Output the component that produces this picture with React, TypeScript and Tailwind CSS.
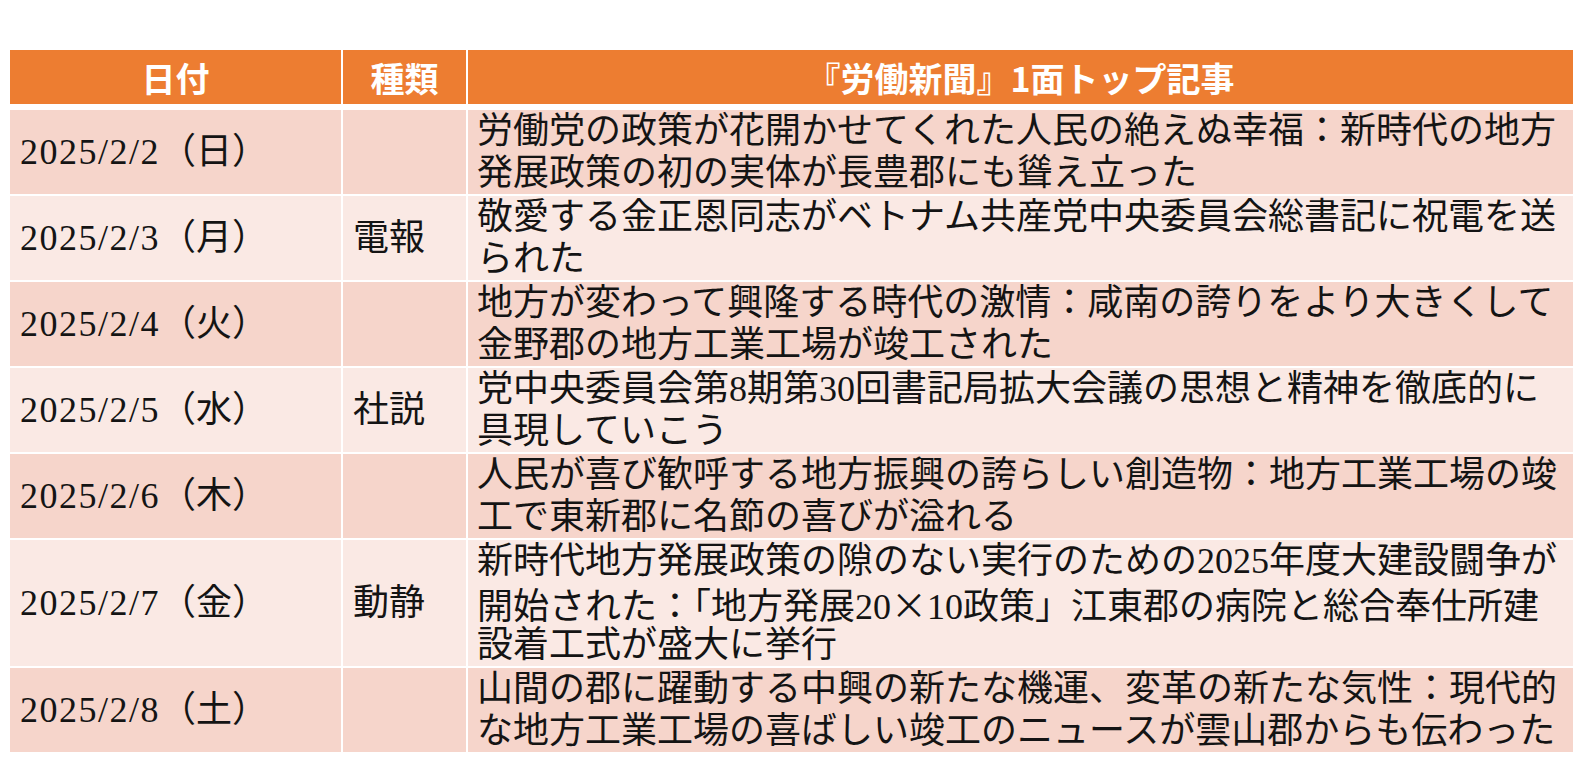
const serif = { fontFamily: '"Liberation Serif", "Noto Sans CJK JP", serif' }
const cjk = { fontFamily: '"Noto Sans CJK JP", sans-serif' }

type Row = {
  date: string
  day: string
  kind: string
  lines: string[]
}

const rows: Row[] = [
  {
    date: "2025/2/2",
    day: "（日）",
    kind: "",
    lines: ["労働党の政策が花開かせてくれた人民の絶えぬ幸福：新時代の地方", "発展政策の初の実体が長豊郡にも聳え立った"],
  },
  {
    date: "2025/2/3",
    day: "（月）",
    kind: "電報",
    lines: ["敬愛する金正恩同志がベトナム共産党中央委員会総書記に祝電を送", "られた"],
  },
  {
    date: "2025/2/4",
    day: "（火）",
    kind: "",
    lines: ["地方が変わって興隆する時代の激情：咸南の誇りをより大きくして", "金野郡の地方工業工場が竣工された"],
  },
  {
    date: "2025/2/5",
    day: "（水）",
    kind: "社説",
    lines: ["党中央委員会第8期第30回書記局拡大会議の思想と精神を徹底的に", "具現していこう"],
  },
  {
    date: "2025/2/6",
    day: "（木）",
    kind: "",
    lines: ["人民が喜び歓呼する地方振興の誇らしい創造物：地方工業工場の竣", "工で東新郡に名節の喜びが溢れる"],
  },
  {
    date: "2025/2/7",
    day: "（金）",
    kind: "動静",
    lines: [
      "新時代地方発展政策の隙のない実行のための2025年度大建設闘争が",
      "開始された：「地方発展20×10政策」江東郡の病院と総合奉仕所建",
      "設着工式が盛大に挙行",
    ],
  },
  {
    date: "2025/2/8",
    day: "（土）",
    kind: "",
    lines: ["山間の郡に躍動する中興の新たな機運、変革の新たな気性：現代的", "な地方工業工場の喜ばしい竣工のニュースが雲山郡からも伝わった"],
  },
]

// the multiplication sign is full width in the source, so set it in the CJK face
function Line({ text }: { text: string }) {
  const parts = text.split("×")
  return (
    <div className="h-[42px] whitespace-nowrap">
      {parts.map((p, i) => (
        <span key={i}>
          {p}
          {i < parts.length - 1 && <span style={cjk}>×</span>}
        </span>
      ))}
    </div>
  )
}

function TableRow({ row, index }: { row: Row; index: number }) {
  const bg = index % 2 === 0 ? "bg-[#F6D5CB]" : "bg-[#FAE9E4]"
  return (
    <div className="grid grid-cols-[331px_123px_1fr] gap-x-[2px] text-[36px] leading-[42px] text-[#141414]" style={serif}>
      <div className={`${bg} flex items-center pl-[10px] whitespace-nowrap`}>
        <span className="tracking-[1.5px]">{row.date}</span>
        <span>{row.day}</span>
      </div>
      <div className={`${bg} flex items-center pl-[10px]`}>{row.kind}</div>
      <div className={`${bg} flex flex-col justify-center pl-[9px] overflow-hidden`}>
        {row.lines.map((line) => (
          <Line key={line} text={line} />
        ))}
      </div>
    </div>
  )
}

export default function App() {
  return (
    <div className="w-[1585px] h-[761px] bg-white pt-[50px] pl-[10px] overflow-hidden">
      <div className="w-[1563px] flex flex-col gap-y-[2px]">
        <div
          className="grid grid-cols-[331px_123px_1fr] gap-x-[2px] h-[54px] mb-[4px] text-white font-bold text-[34px]"
          style={{ fontFamily: '"Noto Sans CJK JP", "Noto Sans", sans-serif' }}
        >
          <div className="bg-[#ED7D31] flex items-center justify-center">日付</div>
          <div className="bg-[#ED7D31] flex items-center justify-center">種類</div>
          <div className="bg-[#ED7D31] flex items-center justify-center">『労働新聞』1面トップ記事</div>
        </div>
        {rows.map((row, i) => (
          <TableRow key={row.date} row={row} index={i} />
        ))}
      </div>
    </div>
  )
}
